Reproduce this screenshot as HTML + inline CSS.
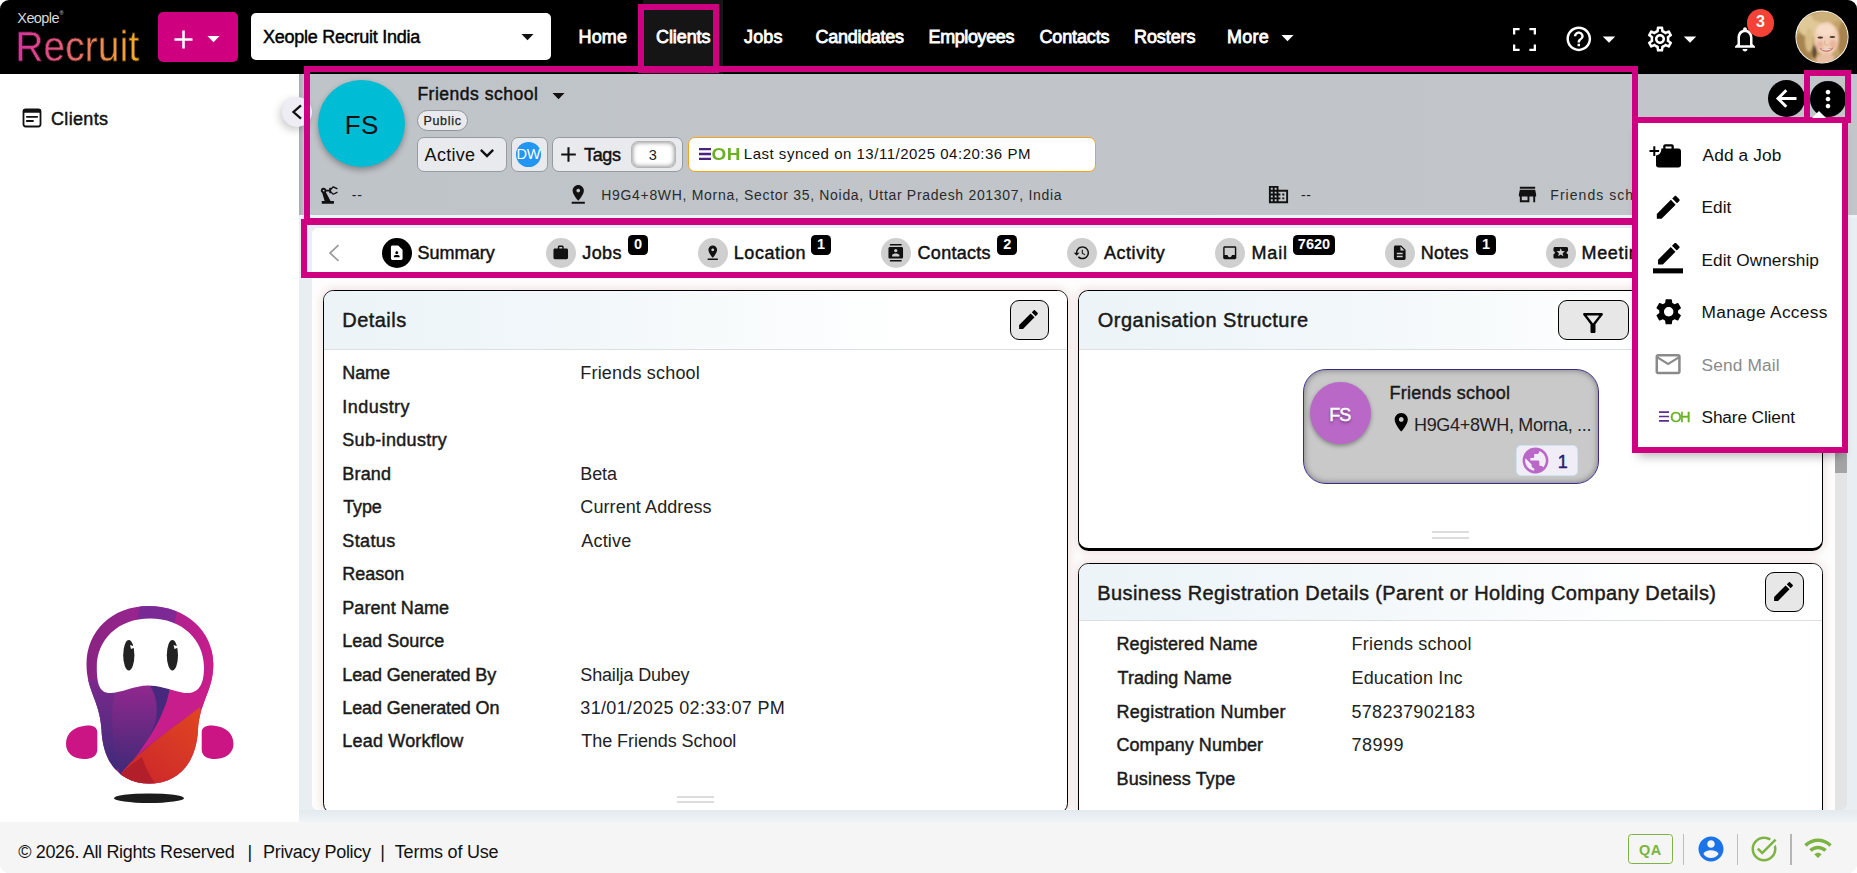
<!DOCTYPE html>
<html lang="en">
<head>
<meta charset="utf-8">
<title>Friends school - Clients - Xeople Recruit</title>
<style>
html,body{margin:0;padding:0;background:#fff}
body{width:1857px;height:873px;overflow:hidden;position:relative;font-family:"Liberation Sans",sans-serif}
#app{position:absolute;left:0;top:0;width:1857px;height:873px;overflow:hidden;border-radius:9px;background:#e9eef2}
#app div,#app span,#app svg,#app a,#app button{position:absolute;box-sizing:border-box;margin:0;padding:0}
.t{line-height:1;white-space:pre}
.m{-webkit-text-stroke:0.45px currentColor}
.b{font-weight:700}
.sb{-webkit-text-stroke:.8px currentColor}
.l{-webkit-text-stroke:.25px currentColor}
.sh{text-shadow:0 2px 3px rgba(0,0,0,.45)}
.grad{background:linear-gradient(90deg,#d9309b 0%,#e2577c 35%,#ee8a4c 68%,#f6ad1f 100%);-webkit-background-clip:text;background-clip:text;color:transparent!important;-webkit-text-fill-color:transparent;-webkit-text-stroke:.4px #000}
.hl{border:6px solid #cf0080;pointer-events:none}
.ic{fill:currentColor}
.card{background:#fff;border:1.6px solid #000;border-radius:10.5px;overflow:hidden;box-shadow:0 0 9px 2px rgba(185,120,120,.2)}
.chead{left:0;top:0;right:0;height:59px;background:linear-gradient(90deg,#ecf4f8 0%,#f3f8fa 40%,#fff 78%);border-bottom:1px solid #dcdfe2}
.ebtn{background:#e7e7e8;border:1.7px solid #000;border-radius:9px;box-shadow:0 0 9px 4px rgba(255,255,255,.75)}
.pill{background:#e8eaed;border:1px solid #969b9f;border-radius:7px}
.tabc{width:30px;height:30px;border-radius:50%;background:#cfcfcf;color:#111}
.tabc svg{left:6.25px;top:6.25px;width:17.5px;height:17.5px}
.bdg{height:19.5px;background:#000;border-radius:4.5px;color:#fff;font-weight:700;font-size:14.5px;line-height:19.5px;text-align:center;top:235.2px}
.grip{height:2.4px;background:#dcdcdc}
</style>
</head>
<body>
<div id="app">

<!-- ===== main background ===== -->
<div id="sidebar" style="left:0;top:74px;width:299px;height:748px;background:#fff"></div>
<div id="hdrbg" style="left:299px;top:74px;width:1558px;height:141px;background:linear-gradient(90deg,#bfc4c9,#c2c6c9)"></div>
<div style="left:299px;top:74px;width:5px;height:141px;background:linear-gradient(90deg,rgba(0,0,0,.13),rgba(0,0,0,0))"></div>

<!-- ===== sidebar ===== -->
<svg viewBox="0 0 20 20" style="left:21.5px;top:107.6px;width:20px;height:20px" fill="none" stroke="#111" stroke-width="1.8">
  <rect x="1.5" y="1.5" width="17" height="17" rx="2.2"/>
  <path d="M1.5 3h17" stroke-width="3.4"/>
  <path d="M4.8 8.8h10.4M4.8 13h6.2" stroke-linecap="round"/>
</svg>
<div id="collapse" style="left:281.7px;top:97px;width:30.2px;height:30.2px;border-radius:50%;background:#eeedf3;box-shadow:-2px 3px 8px rgba(0,0,0,.22)"><svg viewBox="0 0 12 16" style="left:9.5px;top:7.3px;width:12px;height:16px" fill="none" stroke="#111" stroke-width="2.3"><path d="M10 1.3L2.5 8l7.5 6.7"/></svg></div>
<svg id="mascot" viewBox="50 595 200 215" style="left:50px;top:595px;width:200px;height:215px">
  <defs>
    <clipPath id="mbody"><path d="M148.5 606C186 606 213.3 631 213.3 664c0 27-13.5 37-15.3 66-2 35-21 53.5-48.5 53.5S103 765 101.5 730c-1.5-29-15-39-15-66 0-33 25.5-58 62-58z"/></clipPath>
    <linearGradient id="mg1" x1="0" y1="0" x2="1" y2="0"><stop offset="0" stop-color="#86237f"/><stop offset=".45" stop-color="#9a2590"/><stop offset="1" stop-color="#cc1c8c"/></linearGradient>
    <linearGradient id="mg2" x1="0" y1="0" x2="0" y2="1"><stop offset="0" stop-color="#94288f"/><stop offset="1" stop-color="#3b2a76"/></linearGradient>
    <linearGradient id="mg3" x1="0" y1="1" x2="1" y2="0"><stop offset="0" stop-color="#c81f2e"/><stop offset="1" stop-color="#e24a1f"/></linearGradient>
    <linearGradient id="mg4" x1="0" y1="0" x2="0" y2="1"><stop offset="0" stop-color="#7a2a8c"/><stop offset="1" stop-color="#3a2a78"/></linearGradient>
  </defs>
  <g clip-path="url(#mbody)">
    <rect x="80" y="600" width="140" height="190" fill="url(#mg1)"/>
    <path d="M141 600h38l-5 26h-38z" fill="#6a2c97" opacity=".7"/>
    <path d="M86 680h80c-4 36-22 66-52 92l-30 8z" fill="url(#mg4)"/>
    <path d="M116 688c10-3 22-5 32-5 8 12 10 28 6 48-5 22-18 38-34 46-6-30-12-60-4-89z" fill="url(#mg2)"/>
    <path d="M148 683c10 0 16 2 22 4-4 30-20 60-46 84 16-16 28-34 32-52 3-14 0-26-8-36z" fill="#46287c"/>
    <path d="M170 687c12 3 24 6 34 0l12-60v100l-16-20c-30 22-58 40-82 70 22-22 48-60 52-90z" fill="#c81e8c"/>
    <path d="M200 707c-28 22-60 42-80 68l-4 20h100z" fill="url(#mg3)"/>
    <path d="M120 775c8-8 16-14 22-18 3 10 8 20 16 30h-40z" fill="#b21f2a"/>
  </g>
  <path d="M150 618.5c32 0 54 21 54 49 0 21-8 27.5-22 25-14-3.5-24-7-34-7-13 0-27 7.5-38 7.5-10 0-13.2-8-13.2-25.5 0-28 21.2-49 53.2-49z" fill="#fff"/>
  <ellipse cx="128.8" cy="655.3" rx="5.6" ry="15.2" fill="#222"/>
  <ellipse cx="172.4" cy="655.3" rx="5.6" ry="15.2" fill="#222"/>
  <path d="M130 645l6 2-5 2z" fill="#fff"/><path d="M173.5 645l6 2-5 2z" fill="#fff"/>
  <path d="M66 744c0-11 8-17 19-18.3 8-1 12.3 1.5 12.3 7v17c0 7-7 9.5-14 9.3C73 758.5 66 753 66 744z" fill="#cc1585"/>
  <path d="M233.5 744c0-11-8-17-19-18.3-8-1-12.8 1.5-12.8 7v17c0 7 7 9.5 14 9.3 10.3-.5 17.8-6 17.8-15z" fill="#cc1585"/>
  <ellipse cx="149" cy="798.2" rx="35" ry="4.8" fill="#1c1c1c"/>
</svg>

<!-- ===== client header ===== -->
<div id="clavatar" style="left:318px;top:80px;width:87px;height:87px;border-radius:50%;background:#00bcd4;box-shadow:0 3px 6px rgba(0,0,0,.32)"></div>
<svg class="ic" viewBox="0 0 24 24" style="left:544.4px;top:81px;width:29px;height:29px;color:#111"><path d="M7 10l5 5 5-5z"/></svg>
<div style="left:417px;top:109.5px;width:50.5px;height:21.5px;border-radius:11px;background:#e8eaed;border:1px solid #90959a"></div>
<div class="pill" style="left:417px;top:137px;width:90px;height:35px"></div>
<svg class="ic" viewBox="0 0 24 24" style="left:473px;top:139.3px;width:28px;height:28px;color:#111"><path d="M16.59 8.59L12 13.17 7.41 8.59 6 10l6 6 6-6z"/></svg>
<div class="pill" style="left:511px;top:137px;width:37px;height:35px"></div>
<div style="left:516.2px;top:142px;width:24.6px;height:24.6px;border-radius:50%;background:#2196f3"></div>
<span class="t" style="left:514.2px;top:147.4px;width:28.6px;text-align:center;font-size:14.5px;color:#fff">DW</span>
<div class="pill" style="left:552px;top:137px;width:131px;height:35px"></div>
<svg class="ic" viewBox="0 0 24 24" style="left:555.8px;top:141.9px;width:25px;height:25px;color:#111"><path d="M19 13h-6v6h-2v-6H5v-2h6V5h2v6h6v2z"/></svg>
<div style="left:631px;top:141.4px;width:44.8px;height:26.2px;border-radius:7px;background:#fff;box-shadow:inset 0 0 5px rgba(0,0,0,.55);border:1px solid #b5b5b5"></div>
<div id="sync" style="left:688px;top:137px;width:408px;height:34.8px;background:#fff;border:1.6px solid #f5a31f;border-radius:7px"></div>
<svg viewBox="0 0 12 12" style="left:699px;top:148px;width:12px;height:12px"><path d="M0 1.2h12M0 6h12M0 10.8h12" stroke="#4a2382" stroke-width="2.3"/></svg>
<svg class="ic" viewBox="0 0 24 24" style="left:317.6px;top:183.7px;width:22.5px;height:22.5px;color:#111"><path d="M19.93 8.35l-3.6 1.68L14 7.7V6.3l2.33-2.33 3.6 1.68c.38.18.82.01 1-.36.18-.38.01-.82-.36-1L16.65 2.5c-.38-.18-.83-.1-1.13.2l-1.74 1.74c-.18-.27-.48-.44-.83-.44-.55 0-1 .45-1 1v1H8.82C8.34 4.65 6.98 3.73 5.4 4.07c-1.16.25-2.15 1.25-2.36 2.43-.22 1.32.46 2.47 1.48 3.08L7.08 18H4v3h13v-3h-3.62L8.41 8.77c.17-.24.31-.49.41-.77H12v1c0 .55.45 1 1 1 .36 0 .67-.2.84-.48l1.68 1.68c.3.3.75.38 1.13.2l3.92-1.83c.38-.18.54-.62.36-1-.18-.37-.62-.53-1-.37zM6 8c-.55 0-1-.45-1-1s.450-1 1-1 1 .450 1 1-.450 1-1 1z"/></svg>
<svg class="ic" viewBox="0 0 24 24" style="left:567.1px;top:183.1px;width:22.5px;height:22.5px;color:#111"><path d="M18 8c0-3.31-2.69-6-6-6S6 4.69 6 8c0 4.5 6 11 6 11s6-6.5 6-11zm-8 0c0-1.1.9-2 2-2s2 .9 2 2-.890 2-2 2c-1.1 0-2-.9-2-2zM5 20v2h14v-2H5z"/></svg>
<svg class="ic" viewBox="0 0 24 24" style="left:1266.9px;top:183.1px;width:23px;height:23px;color:#111"><path d="M12 7V3H2v18h20V7H12zM6 19H4v-2h2v2zm0-4H4v-2h2v2zm0-4H4V9h2v2zm0-4H4V5h2v2zm4 12H8v-2h2v2zm0-4H8v-2h2v2zm0-4H8V9h2v2zm0-4H8V5h2v2zm10 12h-8v-2h2v-2h-2v-2h2v-2h-2V9h8v10zm-2-8h-2v2h2v-2zm0 4h-2v2h2v-2z"/></svg>
<svg class="ic" viewBox="0 0 24 24" style="left:1515.8px;top:183px;width:23px;height:23px;color:#111"><path d="M20 4H4v2h16V4zm1 10v-2l-1-5H4l-1 5v2h1v6h10v-6h4v6h2v-6h1zm-9 4H6v-4h6v4z"/></svg>
<!-- back / more buttons -->
<div style="left:1767.7px;top:80px;width:37px;height:37px;border-radius:50%;background:#000;color:#fff"><svg viewBox="0 0 37 37" style="left:0;top:0;width:37px;height:37px" fill="none" stroke="#fff" stroke-width="3"><path d="M28.5 18.5H11M18.3 10.2L10 18.5l8.3 8.3"/></svg></div>
<div style="left:1810px;top:80.5px;width:36px;height:36px;border-radius:50%;background:#000;color:#fff"><svg class="ic" viewBox="0 0 24 24" style="left:4px;top:4px;width:28px;height:28px"><path d="M12 8c1.1 0 2-.9 2-2s-.9-2-2-2-2 .9-2 2 .9 2 2 2zm0 2c-1.1 0-2 .9-2 2s.9 2 2 2 2-.9 2-2-.9-2-2-2zm0 6c-1.1 0-2 .9-2 2s.9 2 2 2 2-.9 2-2-.9-2-2-2z"/></svg></div>
<div style="left:299px;top:215px;width:1558px;height:3px;background:#eef3f7"></div>

<!-- ===== content panel ===== -->
<div id="panel" style="left:311.7px;top:227.8px;width:1535.3px;height:582.2px;overflow:hidden;border-radius:6px;background:#fff">
<div style="left:-311.7px;top:-227.8px;width:1857px;height:873px">
  <div style="left:311px;top:278px;width:1536px;height:540px;background:#fefdfd"></div>
  <!-- tabs -->
  <svg viewBox="0 0 12 18" style="left:327.8px;top:244px;width:12px;height:18px" fill="none" stroke="#9b9b9b" stroke-width="1.7"><path d="M10.5 1.2L2 9l8.5 7.8"/></svg>
  <div class="tabc" style="left:382px;top:238px;background:#000;color:#fff"><svg class="ic" viewBox="0 0 24 24"><path d="M14 2H6c-1.1 0-2 .9-2 2v16c0 1.1.9 2 2 2h12c1.1 0 2-.9 2-2V8l-6-6zm-2 8c1.1 0 2 .9 2 2s-.9 2-2 2-2-.9-2-2 .9-2 2-2zm4 8H8v-.57c0-.81.48-1.53 1.22-1.85.85-.37 1.79-.58 2.78-.58.99 0 1.93.21 2.78.58.74.32 1.22 1.04 1.22 1.85V18z"/></svg></div>
  <div class="tabc" style="left:546px;top:238px"><svg class="ic" viewBox="0 0 24 24"><path d="M20 6h-4V4c0-1.11-.89-2-2-2h-4c-1.11 0-2 .89-2 2v2H4c-1.11 0-1.99.89-1.99 2L2 19c0 1.11.89 2 2 2h16c1.11 0 2-.89 2-2V8c0-1.11-.89-2-2-2zm-6 0h-4V4h4v2z"/></svg></div>
  <div class="tabc" style="left:698px;top:238px"><svg class="ic" viewBox="0 0 24 24"><path d="M18 8c0-3.31-2.69-6-6-6S6 4.69 6 8c0 4.5 6 11 6 11s6-6.5 6-11zm-8 0c0-1.1.9-2 2-2s2 .9 2 2-.890 2-2 2c-1.1 0-2-.9-2-2zM5 20v2h14v-2H5z"/></svg></div>
  <div class="tabc" style="left:881px;top:238px"><svg class="ic" viewBox="0 0 24 24"><path d="M20 0H4v2h16V0zM4 24h16v-2H4v2zM20 4H4c-1.1 0-2 .9-2 2v12c0 1.1.9 2 2 2h16c1.1 0 2-.9 2-2V6c0-1.1-.9-2-2-2zm-8 2.75c1.24 0 2.25 1.01 2.25 2.25s-1.01 2.25-2.25 2.25S9.75 10.24 9.75 9 10.76 6.75 12 6.75zM17 17H7v-1.5c0-1.67 3.33-2.5 5-2.5s5 .83 5 2.5V17z"/></svg></div>
  <div class="tabc" style="left:1067px;top:238px"><svg class="ic" viewBox="0 0 24 24"><path d="M13 3c-4.97 0-9 4.03-9 9H1l3.89 3.89.07.14L9 12H6c0-3.87 3.13-7 7-7s7 3.13 7 7-3.13 7-7 7c-1.93 0-3.68-.79-4.94-2.06l-1.42 1.42C8.27 19.99 10.51 21 13 21c4.97 0 9-4.03 9-9s-4.03-9-9-9zm-1 5v5l4.28 2.54.72-1.21-3.5-2.08V8H12z"/></svg></div>
  <div class="tabc" style="left:1215px;top:238px"><svg class="ic" viewBox="0 0 24 24"><path d="M19 3H4.99c-1.11 0-1.98.89-1.98 2L3 19c0 1.1.88 2 1.99 2H19c1.1 0 2-.9 2-2V5c0-1.11-.9-2-2-2zm0 12h-4c0 1.66-1.35 3-3 3s-3-1.34-3-3H4.99V5H19v10z"/></svg></div>
  <div class="tabc" style="left:1385px;top:238px"><svg class="ic" viewBox="0 0 24 24"><path d="M14 2H6c-1.1 0-1.99.9-1.99 2L4 20c0 1.1.89 2 1.99 2H18c1.1 0 2-.9 2-2V8l-6-6zm2 16H8v-2h8v2zm0-4H8v-2h8v2zm-3-5V3.5L18.5 9H13z"/></svg></div>
  <div class="tabc" style="left:1546px;top:238px"><svg class="ic" viewBox="0 0 24 24"><path d="M20 12c0-1.1.9-2 2-2V6c0-1.1-.9-2-2-2H4c-1.1 0-1.99.9-1.99 2v4c1.1 0 1.99.9 1.99 2s-.89 2-2 2v4c0 1.1.9 2 2 2h16c1.1 0 2-.9 2-2v-4c-1.1 0-2-.9-2-2zm-4.42 4.8L12 14.5l-3.58 2.3 1.08-4.12-3.29-2.69 4.24-.25L12 5.8l1.54 3.95 4.24.25-3.29 2.69 1.09 4.11z"/></svg></div>
  <div class="bdg" style="left:628px;width:20px">0</div>
  <div class="bdg" style="left:811px;width:20px">1</div>
  <div class="bdg" style="left:997.2px;width:20px">2</div>
  <div class="bdg" style="left:1293px;width:42px">7620</div>
  <div class="bdg" style="left:1476px;width:20px">1</div>

  <!-- Details card -->
  <div class="card" id="details" style="left:323px;top:290px;width:745px;height:524px">
    <div class="chead"></div>
    <div class="ebtn" style="left:685.5px;top:8.5px;width:39.5px;height:40px"><svg class="ic" viewBox="0 0 24 24" style="left:5.6px;top:6px;width:25px;height:25px;color:#000"><path d="M3 17.25V21h3.75L17.81 9.94l-3.75-3.75L3 17.25zM20.71 7.04c.39-.39.39-1.02 0-1.41l-2.34-2.34c-.39-.39-1.02-.39-1.41 0l-1.83 1.83 3.75 3.75 1.83-1.83z"/></svg></div>
    <div class="grip" style="left:352.5px;top:504.8px;width:37px"></div>
    <div class="grip" style="left:352.5px;top:509.7px;width:37px"></div>
  </div>

  <!-- Organisation Structure card -->
  <div class="card" id="org" style="left:1078px;top:290px;width:745px;height:260.5px;border-bottom-width:3.5px">
    <div class="chead"></div>
    <div class="ebtn" style="left:478.5px;top:8.5px;width:71px;height:40px"><svg class="ic" viewBox="0 0 24 24" style="left:19.7px;top:7px;width:30px;height:30px;color:#000"><path d="M7 6h10l-5.01 6.3L7 6zm-2.75-.39C6.27 8.2 10 13 10 13v6c0 .55.45 1 1 1h2c.55 0 1-.45 1-1v-6s3.72-4.8 5.74-7.39c.51-.66.04-1.61-.79-1.61H5.04c-.83 0-1.3.95-.79 1.61z"/></svg></div>
    <div id="node" style="left:223.5px;top:77.5px;width:296px;height:115px;background:#c9c9c9;border:1.2px solid #3b2a8c;border-radius:23px;box-shadow:inset 0 0 6px rgba(0,0,0,.42)">
      <div style="left:6px;top:12px;width:61.5px;height:62.5px;border-radius:50%;background:#ba68c8;box-shadow:0 2px 4px rgba(0,0,0,.35)"></div>
      <svg class="ic" viewBox="0 0 24 24" style="left:86px;top:41.7px;width:22.5px;height:22.5px;color:#000"><path d="M12 2C8.13 2 5 5.13 5 9c0 5.25 7 13 7 13s7-7.75 7-13c0-3.87-3.13-7-7-7zm0 9.5c-1.38 0-2.5-1.12-2.5-2.5s1.12-2.5 2.5-2.5 2.5 1.12 2.5 2.5-1.12 2.5-2.5 2.5z"/></svg>
      <div style="left:212px;top:75px;width:62.5px;height:31px;background:#f1edf6;border:1px solid #cfe3f0;border-radius:5px">
        <svg class="ic" viewBox="0 0 24 24" style="left:3.5px;top:-1px;width:31px;height:31px;color:#ba68c8"><path d="M12 2C6.48 2 2 6.48 2 12s4.48 10 10 10 10-4.48 10-10S17.52 2 12 2zm-1 17.93c-3.95-.49-7-3.85-7-7.93 0-.62.08-1.21.21-1.79L9 15v1c0 1.1.9 2 2 2v1.93zm6.9-2.54c-.26-.81-1-1.39-1.9-1.39h-1v-3c0-.55-.45-1-1-1H8v-2h2c.55 0 1-.45 1-1V7h2c1.1 0 2-.9 2-2v-.41c2.93 1.19 5 4.06 5 7.41 0 2.08-.8 3.97-2.1 5.39z"/></svg>
      </div>
    </div>
    <div class="grip" style="left:352.5px;top:239.5px;width:37px"></div>
    <div class="grip" style="left:352.5px;top:245.5px;width:37px"></div>
  </div>

  <!-- Business Registration card -->
  <div class="card" id="biz" style="left:1078px;top:562.5px;width:745px;height:262px">
    <div class="chead" style="height:57px"></div>
    <div class="ebtn" style="left:685.5px;top:8px;width:39.5px;height:40px"><svg class="ic" viewBox="0 0 24 24" style="left:5.6px;top:6px;width:25px;height:25px;color:#000"><path d="M3 17.25V21h3.75L17.81 9.94l-3.75-3.75L3 17.25zM20.71 7.04c.39-.39.39-1.02 0-1.41l-2.34-2.34c-.39-.39-1.02-.39-1.41 0l-1.83 1.83 3.75 3.75 1.83-1.83z"/></svg></div>
  </div>

  <!-- scrollbar -->
  <div style="left:1834.7px;top:278px;width:12.8px;height:540px;background:#e4e4e4"></div>
  <div style="left:1834.7px;top:290px;width:12.8px;height:182.5px;background:#a4a4a4"></div>
</div>
</div>

<!-- ===== footer ===== -->
<div id="footer" style="left:0;top:821.8px;width:1857px;height:52px;background:#f5f5f5"></div>
<div style="left:299px;top:810px;width:1558px;height:12px;background:linear-gradient(180deg,#e3eaef,#eef3f6)"></div>
<div style="left:1628px;top:834px;width:45px;height:30px;border:1.5px solid #7cb342;border-radius:3.5px"></div>
<div style="left:1683px;top:834px;width:1.2px;height:31px;background:#bdbdbd"></div>
<svg class="ic" viewBox="0 0 24 24" style="left:1695.6px;top:834px;width:30px;height:30px;color:#1a73e8"><path d="M12 2C6.48 2 2 6.48 2 12s4.48 10 10 10 10-4.48 10-10S17.52 2 12 2zm0 3c1.66 0 3 1.34 3 3s-1.34 3-3 3-3-1.34-3-3 1.34-3 3-3zm0 14.2c-2.5 0-4.71-1.28-6-3.22.03-1.99 4-3.08 6-3.08 1.99 0 5.97 1.09 6 3.08-1.29 1.94-3.5 3.22-6 3.22z"/></svg>
<div style="left:1737px;top:834px;width:1.2px;height:31px;background:#bdbdbd"></div>
<svg class="ic" viewBox="0 0 24 24" style="left:1749px;top:834px;width:30px;height:30px;color:#7cb342"><path d="M22 5.18L10.59 16.6l-4.24-4.24 1.41-1.41 2.83 2.83 10-10L22 5.18zm-2.21 5.04c.13.57.21 1.17.21 1.78 0 4.42-3.58 8-8 8s-8-3.58-8-8 3.58-8 8-8c1.58 0 3.04.46 4.28 1.25l1.44-1.44C16.1 2.67 14.13 2 12 2 6.48 2 2 6.48 2 12s4.48 10 10 10 10-4.48 10-10c0-1.19-.22-2.33-.6-3.39l-1.61 1.61z"/></svg>
<div style="left:1790.3px;top:834px;width:2px;height:31px;background:#b5b5b5"></div>
<svg class="ic" viewBox="0 0 24 24" style="left:1802.7px;top:832.5px;width:30px;height:30px;color:#7cb342"><path d="M1 9l2 2c4.97-4.97 13.03-4.97 18 0l2-2C16.93 2.93 7.08 2.93 1 9zm8 8l3 3 3-3c-1.65-1.66-4.34-1.66-6 0zm-4-4l2 2c2.76-2.76 7.24-2.76 10 0l2-2C15.14 9.14 8.87 9.14 5 13z"/></svg>

<!-- ===== top bar ===== -->
<div id="topbar" style="left:0;top:0;width:1857px;height:74px;background:#000"></div>
<div style="left:643px;top:0;width:80px;height:74px;background:#151515"></div>
<div id="addbtn" style="left:158px;top:12px;width:80px;height:50px;background:#cf0080;border-radius:5px;color:#fff">
  <svg class="ic" viewBox="0 0 24 24" style="left:9.5px;top:11.5px;width:31px;height:31px"><path d="M19 13h-6v6h-2v-6H5v-2h6V5h2v6h6v2z"/></svg>
  <svg class="ic" viewBox="0 0 24 24" style="left:40.5px;top:12.4px;width:29px;height:29px"><path d="M7 10l5 5 5-5z"/></svg>
</div>
<div id="orgsel" style="left:251px;top:13px;width:300px;height:47px;background:#fff;border-radius:5px;color:#111">
  <svg class="ic" viewBox="0 0 24 24" style="left:261.5px;top:9px;width:29px;height:29px"><path d="M7 10l5 5 5-5z"/></svg>
</div>
<svg class="ic" viewBox="0 0 24 24" style="left:1273px;top:23.4px;width:29px;height:29px;color:#fff"><path d="M7 10l5 5 5-5z"/></svg>
<svg viewBox="0 0 23 23" style="left:1512.5px;top:27.5px;width:23px;height:23px" fill="none" stroke="#fff" stroke-width="2.3"><path d="M1.15 6.6V1.15H6.6M16.4 1.15h5.45V6.6M21.85 16.4v5.45H16.4M6.6 21.85H1.15V16.4"/></svg>
<svg class="ic" viewBox="0 0 24 24" style="left:1564.2px;top:24.2px;width:29.6px;height:29.6px;color:#fff"><path d="M11 18h2v-2h-2v2zm1-16C6.48 2 2 6.48 2 12s4.48 10 10 10 10-4.48 10-10S17.52 2 12 2zm0 18c-4.41 0-8-3.59-8-8s3.59-8 8-8 8 3.59 8 8-3.59 8-8 8zm0-14c-2.21 0-4 1.79-4 4h2c0-1.1.9-2 2-2s2 .9 2 2c0 2-3 1.75-3 5h2c0-2.25 3-2.5 3-5 0-2.21-1.79-4-4-4z"/></svg>
<svg class="ic" viewBox="0 0 24 24" style="left:1594.3px;top:24.3px;width:30px;height:30px;color:#fff"><path d="M7 10l5 5 5-5z"/></svg>
<svg class="ic" viewBox="0 0 24 24" style="left:1645px;top:23.8px;width:30px;height:30px;color:#fff"><path d="M19.43 12.98c.04-.32.07-.64.07-.98 0-.34-.03-.66-.07-.98l2.11-1.65c.19-.15.24-.42.12-.64l-2-3.46c-.09-.16-.26-.25-.44-.25-.06 0-.12.01-.17.03l-2.49 1c-.52-.4-1.08-.73-1.69-.98l-.38-2.65C14.46 2.18 14.25 2 14 2h-4c-.25 0-.46.18-.49.42l-.38 2.65c-.61.25-1.17.59-1.69.98l-2.49-1c-.06-.02-.12-.03-.18-.03-.17 0-.34.09-.43.25l-2 3.46c-.13.22-.07.49.12.64l2.11 1.65c-.04.32-.07.65-.07.98 0 .33.03.66.07.98l-2.11 1.65c-.19.15-.24.42-.12.64l2 3.46c.09.16.26.25.44.25.06 0 .12-.01.17-.03l2.49-1c.52.4 1.08.73 1.69.98l.38 2.65c.03.24.24.42.49.42h4c.25 0 .46-.18.49-.42l.38-2.65c.61-.25 1.17-.59 1.69-.98l2.49 1c.06.02.12.03.18.03.17 0 .34-.09.43-.25l2-3.46c.12-.22.07-.49-.12-.64l-2.11-1.65zm-1.98-1.71c.04.31.05.52.05.73 0 .21-.02.43-.05.73l-.14 1.13.89.7 1.08.84-.7 1.21-1.27-.51-1.04-.42-.9.68c-.43.32-.84.56-1.25.73l-1.06.43-.16 1.13-.2 1.35h-1.4l-.19-1.35-.16-1.13-1.06-.43c-.43-.18-.83-.41-1.23-.71l-.91-.7-1.06.43-1.27.51-.7-1.21 1.08-.84.89-.7-.14-1.13c-.03-.31-.05-.54-.05-.74s.02-.43.05-.73l.14-1.13-.89-.7-1.08-.84.7-1.21 1.27.51 1.04.42.9-.68c.43-.32.84-.56 1.25-.73l1.06-.43.16-1.13.2-1.35h1.39l.19 1.35.16 1.13 1.06.43c.43.18.83.41 1.23.71l.91.7 1.06-.43 1.27-.51.7 1.21-1.07.85-.89.7.14 1.13zM12 8c-2.21 0-4 1.79-4 4s1.79 4 4 4 4-1.79 4-4-1.79-4-4-4zm0 6c-1.1 0-2-.9-2-2s.9-2 2-2 2 .9 2 2-.9 2-2 2z"/></svg>
<svg class="ic" viewBox="0 0 24 24" style="left:1675px;top:24.3px;width:30px;height:30px;color:#fff"><path d="M7 10l5 5 5-5z"/></svg>
<svg class="ic" viewBox="0 0 24 24" style="left:1730px;top:23.6px;width:30px;height:30px;color:#fff"><path d="M12 22c1.1 0 2-.9 2-2h-4c0 1.1.9 2 2 2zm6-6v-5c0-3.07-1.63-5.64-4.5-6.32V4c0-.83-.67-1.5-1.5-1.5s-1.5.67-1.5 1.5v.68C7.64 5.36 6 7.92 6 11v5l-2 2v1h16v-1l-2-2zm-2 1H8v-6c0-2.48 1.51-4.5 4-4.5s4 2.02 4 4.5v6z"/></svg>
<div style="left:1747px;top:9.3px;width:27.4px;height:27.4px;border-radius:50%;background:#f44336"></div>
<span class="t b" style="left:1756px;top:14.3px;font-size:16px;color:#fff">3</span>
<svg id="avatar" viewBox="0 0 54 54" style="left:1795px;top:10px;width:54px;height:54px">
  <defs>
    <clipPath id="avc"><circle cx="27" cy="27" r="25.6"/></clipPath>
    <filter id="avb" x="-20%" y="-20%" width="140%" height="140%"><feGaussianBlur stdDeviation="1.3"/></filter>
    <filter id="avs" x="-50%" y="-50%" width="200%" height="200%"><feGaussianBlur stdDeviation=".55"/></filter>
  </defs>
  <circle cx="27" cy="27" r="26.6" fill="#fff"/>
  <g clip-path="url(#avc)">
    <rect width="54" height="54" fill="#c3a26a"/>
    <g filter="url(#avb)">
      <ellipse cx="9" cy="38" rx="10" ry="17" fill="#a88550"/>
      <ellipse cx="15" cy="16" rx="12" ry="11" fill="#e0c997"/>
      <ellipse cx="32" cy="7" rx="15" ry="6" fill="#cdb07a"/>
      <ellipse cx="14" cy="30" rx="4" ry="12" fill="#d8bd88"/>
      <ellipse cx="48.5" cy="30" rx="5.5" ry="18" fill="#a9834e"/>
      <ellipse cx="31.5" cy="28.5" rx="12.3" ry="16.5" fill="#f2cfb8"/>
      <ellipse cx="30" cy="20" rx="9" ry="6" fill="#f7dcc8"/>
      <ellipse cx="31" cy="51" rx="9.5" ry="8" fill="#e8bfa2"/>
      <ellipse cx="19.5" cy="42" rx="2.2" ry="6.5" fill="#5c4630"/>
      <ellipse cx="45.5" cy="52" rx="7" ry="5" fill="#505346"/>
      <ellipse cx="38" cy="34" rx="3.5" ry="4" fill="#eab59d"/>
      <ellipse cx="25" cy="35" rx="3.5" ry="4" fill="#eab59d"/>
    </g>
    <g filter="url(#avs)">
      <ellipse cx="25.3" cy="27.6" rx="2.9" ry="1.1" fill="#4d392c"/>
      <ellipse cx="37.4" cy="27" rx="2.9" ry="1.1" fill="#4d392c"/>
      <path d="M24.5 38c4 1.5 10 1.3 14-.8-1.3 5.3-11.5 6.3-14 .8z" fill="#bf746c"/>
      <path d="M26 38.7c3.5 1 8 .9 11-.4-1.8 2.6-8.8 2.9-11 .4z" fill="#f8f4ee"/>
      <path d="M30 30.5c-.5 2-.6 3.5.2 4.3 1 .6 2.3.5 3.3-.1" stroke="#d9a58c" stroke-width=".8" fill="none"/>
    </g>
  </g>
</svg>
<!-- logo -->
<span class="t" style="left:59.4px;top:11.3px;font-size:5.5px;color:#ccc">®</span>


<!-- ===== text layer ===== -->
<span class="t" style="left:17.3px;top:11.3px;font-size:14.5px;color:#d8d8d8;letter-spacing:-0.58px;">Xeople</span>
<span class="t grad" style="left:15.4px;top:28.9px;font-size:38.5px;color:#e0559a;letter-spacing:0.32px;transform:scaleY(1.117);transform-origin:0 84.65%;">Recruit</span>
<span class="t m" style="left:263px;top:28.1px;font-size:18px;color:#000;letter-spacing:-0.26px;">Xeople Recruit India</span>
<span class="t sb" style="left:578.5px;top:28.1px;font-size:18px;color:#fff;letter-spacing:0.17px;">Home</span>
<span class="t sb" style="left:656px;top:28.1px;font-size:18px;color:#fff;letter-spacing:-0.08px;">Clients</span>
<span class="t sb" style="left:744px;top:28.1px;font-size:18px;color:#fff;letter-spacing:0.17px;">Jobs</span>
<span class="t sb" style="left:815.5px;top:28.1px;font-size:18px;color:#fff;letter-spacing:-0.28px;">Candidates</span>
<span class="t sb" style="left:928.5px;top:28.1px;font-size:18px;color:#fff;letter-spacing:-0.38px;">Employees</span>
<span class="t sb" style="left:1039.5px;top:28.1px;font-size:18px;color:#fff;letter-spacing:-0.14px;">Contacts</span>
<span class="t sb" style="left:1134px;top:28.1px;font-size:18px;color:#fff;letter-spacing:-0.08px;">Rosters</span>
<span class="t sb" style="left:1227px;top:28.1px;font-size:18px;color:#fff;letter-spacing:0.27px;">More</span>
<span class="t m" style="left:51px;top:109.7px;font-size:18px;color:#111;letter-spacing:0.33px;">Clients</span>
<span class="t" style="left:344.8px;top:111.7px;font-size:26px;color:#111;letter-spacing:0.2px;">FS</span>
<span class="t m" style="left:417.4px;top:86.3px;font-size:17.5px;color:#111;letter-spacing:0.51px;">Friends school</span>
<span class="t l" style="left:423.4px;top:114.9px;font-size:12.5px;color:#222;letter-spacing:0.72px;">Public</span>
<span class="t" style="left:424.6px;top:146.1px;font-size:18px;color:#111;letter-spacing:0.28px;">Active</span>
<span class="t m" style="left:584px;top:146.1px;font-size:18px;color:#111;letter-spacing:-0.33px;">Tags</span>
<span class="t" style="left:648.8px;top:147.5px;font-size:14.5px;color:#222;">3</span>
<span class="t" style="left:743.8px;top:146.3px;font-size:15px;color:#111;letter-spacing:0.51px;">Last synced on 13/11/2025 04:20:36 PM</span>
<span class="t" style="left:351.7px;top:187.8px;font-size:14px;color:#222;letter-spacing:0.8px;">--</span>
<span class="t" style="left:601.2px;top:187.8px;font-size:14px;color:#2a2a2a;letter-spacing:0.69px;">H9G4+8WH, Morna, Sector 35, Noida, Uttar Pradesh 201307, India</span>
<span class="t" style="left:1300.9px;top:187.8px;font-size:14px;color:#222;letter-spacing:0.7px;">--</span>
<span class="t m" style="left:417.4px;top:243.9px;font-size:18px;color:#111;letter-spacing:0.07px;">Summary</span>
<span class="t m" style="left:582.3px;top:243.9px;font-size:18px;color:#111;letter-spacing:0.37px;">Jobs</span>
<span class="t m" style="left:733.8px;top:243.9px;font-size:18px;color:#111;letter-spacing:0.53px;">Location</span>
<span class="t m" style="left:917.6px;top:243.9px;font-size:18px;color:#111;letter-spacing:0.27px;">Contacts</span>
<span class="t m" style="left:1104px;top:243.9px;font-size:18px;color:#111;letter-spacing:0.53px;">Activity</span>
<span class="t m" style="left:1251.4px;top:243.9px;font-size:18px;color:#111;letter-spacing:0.87px;">Mail</span>
<span class="t m" style="left:1420.8px;top:243.9px;font-size:18px;color:#111;letter-spacing:0.2px;">Notes</span>
<span class="t m" style="left:1581.6px;top:243.9px;font-size:18px;color:#111;letter-spacing:0.63px;">Meetings</span>
<span class="t" style="left:1550.3px;top:187.8px;font-size:14px;color:#2a2a2a;letter-spacing:1.05px;">Friends school</span>
<span class="t b" style="left:711.6px;top:144px;font-size:19px;color:#6bb024;letter-spacing:0.4px;transform:scaleY(0.855);transform-origin:0 84.65%;">OH</span>
<span class="t m" style="left:342.3px;top:310.4px;font-size:20px;color:#1a1a1a;letter-spacing:0.45px;">Details</span>
<span class="t m" style="left:342.3px;top:363.9px;font-size:18px;color:#1a1a1a;letter-spacing:-0.1px;">Name</span>
<span class="t m" style="left:342.3px;top:397.6px;font-size:18px;color:#1a1a1a;letter-spacing:0.46px;">Industry</span>
<span class="t m" style="left:342.3px;top:430.9px;font-size:18px;color:#1a1a1a;letter-spacing:0.32px;">Sub-industry</span>
<span class="t m" style="left:342.3px;top:464.6px;font-size:18px;color:#1a1a1a;letter-spacing:0.17px;">Brand</span>
<span class="t m" style="left:343.3px;top:497.9px;font-size:18px;color:#1a1a1a;letter-spacing:-0.2px;">Type</span>
<span class="t m" style="left:342.3px;top:531.6px;font-size:18px;color:#1a1a1a;letter-spacing:0.38px;">Status</span>
<span class="t m" style="left:342.3px;top:565.3px;font-size:18px;color:#1a1a1a;letter-spacing:-0.02px;">Reason</span>
<span class="t m" style="left:342.3px;top:598.9px;font-size:18px;color:#1a1a1a;letter-spacing:0.07px;">Parent Name</span>
<span class="t m" style="left:342.3px;top:632.1px;font-size:18px;color:#1a1a1a;letter-spacing:-0.01px;">Lead Source</span>
<span class="t m" style="left:342.3px;top:665.7px;font-size:18px;color:#1a1a1a;letter-spacing:-0.14px;">Lead Generated By</span>
<span class="t m" style="left:342.3px;top:698.8px;font-size:18px;color:#1a1a1a;letter-spacing:-0.12px;">Lead Generated On</span>
<span class="t m" style="left:342.3px;top:732.4px;font-size:18px;color:#1a1a1a;letter-spacing:0.19px;">Lead Workflow</span>
<span class="t" style="left:580.3px;top:363.9px;font-size:18px;color:#222;letter-spacing:0.19px;">Friends school</span>
<span class="t" style="left:580.3px;top:464.6px;font-size:18px;color:#222;letter-spacing:-0.1px;">Beta</span>
<span class="t" style="left:580.3px;top:497.9px;font-size:18px;color:#222;letter-spacing:0.09px;">Current Address</span>
<span class="t" style="left:581.3px;top:531.6px;font-size:18px;color:#222;letter-spacing:0.18px;">Active</span>
<span class="t" style="left:580.3px;top:665.7px;font-size:18px;color:#222;letter-spacing:-0.15px;">Shailja Dubey</span>
<span class="t" style="left:580.3px;top:698.8px;font-size:18px;color:#222;letter-spacing:0.35px;">31/01/2025 02:33:07 PM</span>
<span class="t" style="left:581.3px;top:732.4px;font-size:18px;color:#222;letter-spacing:-0.06px;">The Friends School</span>
<span class="t m" style="left:1097.8px;top:310.4px;font-size:20px;color:#1a1a1a;letter-spacing:0.49px;">Organisation Structure</span>
<span class="t m sh" style="left:1329.3px;top:405.6px;font-size:18px;color:#fff;letter-spacing:-1px;">FS</span>
<span class="t m" style="left:1389.5px;top:383.9px;font-size:18px;color:#1a1a1a;letter-spacing:0.27px;">Friends school</span>
<span class="t" style="left:1414px;top:416.4px;font-size:18px;color:#222;letter-spacing:-0.32px;">H9G4+8WH, Morna, ...</span>
<span class="t m" style="left:1557.8px;top:453.1px;font-size:18px;color:#2a1a6e;">1</span>
<span class="t m" style="left:1097.3px;top:582.7px;font-size:20px;color:#1a1a1a;letter-spacing:0.41px;">Business Registration Details (Parent or Holding Company Details)</span>
<span class="t m" style="left:1116.5px;top:635.1px;font-size:18px;color:#1a1a1a;letter-spacing:0.07px;">Registered Name</span>
<span class="t m" style="left:1117.5px;top:668.9px;font-size:18px;color:#1a1a1a;letter-spacing:0.07px;">Trading Name</span>
<span class="t m" style="left:1116.5px;top:702.6px;font-size:18px;color:#1a1a1a;letter-spacing:0.22px;">Registration Number</span>
<span class="t m" style="left:1116.5px;top:735.9px;font-size:18px;color:#1a1a1a;letter-spacing:0.04px;">Company Number</span>
<span class="t m" style="left:1116.5px;top:769.7px;font-size:18px;color:#1a1a1a;letter-spacing:0.16px;">Business Type</span>
<span class="t" style="left:1351.5px;top:635.1px;font-size:18px;color:#222;letter-spacing:0.23px;">Friends school</span>
<span class="t" style="left:1351.5px;top:668.9px;font-size:18px;color:#222;letter-spacing:0.17px;">Education Inc</span>
<span class="t" style="left:1351.5px;top:702.6px;font-size:18px;color:#222;letter-spacing:0.3px;">578237902183</span>
<span class="t" style="left:1351.5px;top:735.9px;font-size:18px;color:#222;letter-spacing:0.5px;">78999</span>
<span class="t" style="left:18.2px;top:843.3px;font-size:18px;color:#111;letter-spacing:-0.34px;">© 2026. All Rights Reserved</span>
<span class="t" style="left:247.5px;top:843.3px;font-size:18px;color:#111;">|</span>
<span class="t" style="left:263px;top:843.3px;font-size:18px;color:#111;letter-spacing:-0.31px;">Privacy Policy</span>
<span class="t" style="left:380.3px;top:843.3px;font-size:18px;color:#111;">|</span>
<span class="t" style="left:394.8px;top:843.3px;font-size:18px;color:#111;letter-spacing:-0.2px;">Terms of Use</span>
<span class="t b" style="left:1639px;top:842.8px;font-size:14.5px;color:#7cb342;letter-spacing:0.5px;">QA</span>

<!-- ===== highlight boxes and open action menu ===== -->
<div class="hl" style="left:638px;top:4px;width:81.3px;height:68.5px"></div>
<div class="hl" style="left:304px;top:66px;width:1334.3px;height:158px"></div>
<div class="hl" style="left:301px;top:219px;width:1338px;height:59px"></div>
<div id="menu" style="left:1638px;top:123px;width:204px;height:324px;background:#fff;box-shadow:0 9px 10px 0 rgba(0,0,0,.3)"></div>
<div class="hl" style="left:1632px;top:117px;width:216px;height:335.5px"></div>
<div class="hl" style="left:1804px;top:70.2px;width:47px;height:53px"></div>
<svg viewBox="0 0 14 7" style="left:1812px;top:110.5px;width:14px;height:7px"><path d="M0 7L7 0l7 7z" fill="#fff"/></svg>
<!-- menu icons -->
<svg viewBox="0 0 34 26" style="left:1649px;top:142.5px;width:34px;height:26px" fill="#000">
  <path d="M5.3 3.3v9.6M.5 8.1h9.6" stroke="#000" stroke-width="2" fill="none"/>
  <path d="M9.5 5.5h4.7V3.3c0-1.1.9-2 2-2h6.6c1.1 0 2 .9 2 2v2.2h4.7c1.4 0 2.5 1.1 2.5 2.5v14c0 1.4-1.1 2.5-2.5 2.5h-20c-1.4 0-2.5-1.1-2.5-2.5v-9.5c3.3-.5 5.3-3 5.3-6.3 0-.25 0-.5-.05-.7zM16.5 3.6v1.9h6V3.6z" fill-rule="evenodd"/>
</svg>
<svg class="ic" viewBox="0 0 24 24" style="left:1653px;top:191.7px;width:30.5px;height:30.5px;color:#000"><path d="M3 17.25V21h3.75L17.81 9.94l-3.75-3.75L3 17.25zM20.71 7.04c.39-.39.39-1.02 0-1.41l-2.34-2.34c-.39-.39-1.02-.39-1.41 0l-1.83 1.83 3.75 3.75 1.83-1.83z"/></svg>
<svg class="ic" viewBox="0 0 24 24" style="left:1653px;top:243.4px;width:30.4px;height:30.4px;color:#000"><path d="M17.75 7L14 3.25l-10 10V17h3.75l10-10zm2.96-2.96c.39-.39.39-1.02 0-1.41L18.37.29c-.39-.39-1.02-.39-1.41 0L15 2.25 18.75 6l1.96-1.96z"/><path d="M0 20h24v4H0z"/></svg>
<svg class="ic" viewBox="0 0 24 24" style="left:1652.6px;top:296.1px;width:31.4px;height:31.4px;color:#000"><path d="M19.14 12.94c.04-.3.06-.61.06-.94 0-.32-.02-.64-.07-.94l2.03-1.58c.18-.14.23-.41.12-.61l-1.92-3.32c-.12-.22-.37-.29-.59-.22l-2.39.96c-.5-.38-1.03-.7-1.62-.94l-.36-2.54c-.04-.24-.24-.41-.48-.41h-3.84c-.24 0-.43.17-.47.41l-.36 2.54c-.59.24-1.13.57-1.62.94l-2.39-.96c-.22-.08-.47 0-.59.22L2.74 8.87c-.12.21-.08.47.12.61l2.03 1.58c-.05.3-.09.63-.09.94s.02.64.07.94l-2.03 1.58c-.18.14-.23.41-.12.61l1.92 3.32c.12.22.37.29.59.22l2.39-.96c.5.38 1.03.7 1.62.94l.36 2.54c.05.24.24.41.48.41h3.84c.24 0 .44-.17.47-.41l.36-2.54c.59-.24 1.13-.56 1.62-.94l2.39.96c.22.08.47 0 .59-.22l1.92-3.32c.12-.22.07-.47-.12-.61l-2.01-1.58zM12 15.6c-1.98 0-3.6-1.62-3.6-3.6s1.62-3.6 3.6-3.6 3.6 1.62 3.6 3.6-1.62 3.6-3.6 3.6z"/></svg>
<svg class="ic" viewBox="0 0 24 24" style="left:1653.3px;top:349px;width:30.2px;height:30.2px;color:#8a8a8a"><path d="M20 4H4c-1.1 0-1.99.9-1.99 2L2 18c0 1.1.9 2 2 2h16c1.1 0 2-.9 2-2V6c0-1.1-.9-2-2-2zm0 14H4V8l8 5 8-5v10zm-8-7L4 6h16l-8 5z"/></svg>
<svg viewBox="0 0 11 11" style="left:1658.8px;top:410.8px;width:10.5px;height:11px"><path d="M0 1h11M0 5.5h11M0 10h11" stroke="#5b2d8e" stroke-width="1.8"/></svg>
<span class="t" style="left:1702.5px;top:146.6px;font-size:17.3px;color:#111;letter-spacing:0.14px;">Add a Job</span>
<span class="t" style="left:1701.5px;top:198.5px;font-size:17.3px;color:#111;">Edit</span>
<span class="t" style="left:1701.5px;top:251.6px;font-size:17.3px;color:#111;letter-spacing:0.02px;">Edit Ownership</span>
<span class="t" style="left:1701.5px;top:303.5px;font-size:17.3px;color:#111;letter-spacing:0.32px;">Manage Access</span>
<span class="t" style="left:1701.5px;top:356.7px;font-size:17.3px;color:#8a8a8a;letter-spacing:0.16px;">Send Mail</span>
<span class="t m" style="left:1670.3px;top:409.8px;font-size:14.5px;color:#6bb024;letter-spacing:-1.7px;transform:scaleY(1.06);transform-origin:0 84.65%;">OH</span>
<span class="t" style="left:1701.5px;top:408.7px;font-size:17.3px;color:#111;letter-spacing:-0.14px;">Share Client</span>


</div>
</body>
</html>
